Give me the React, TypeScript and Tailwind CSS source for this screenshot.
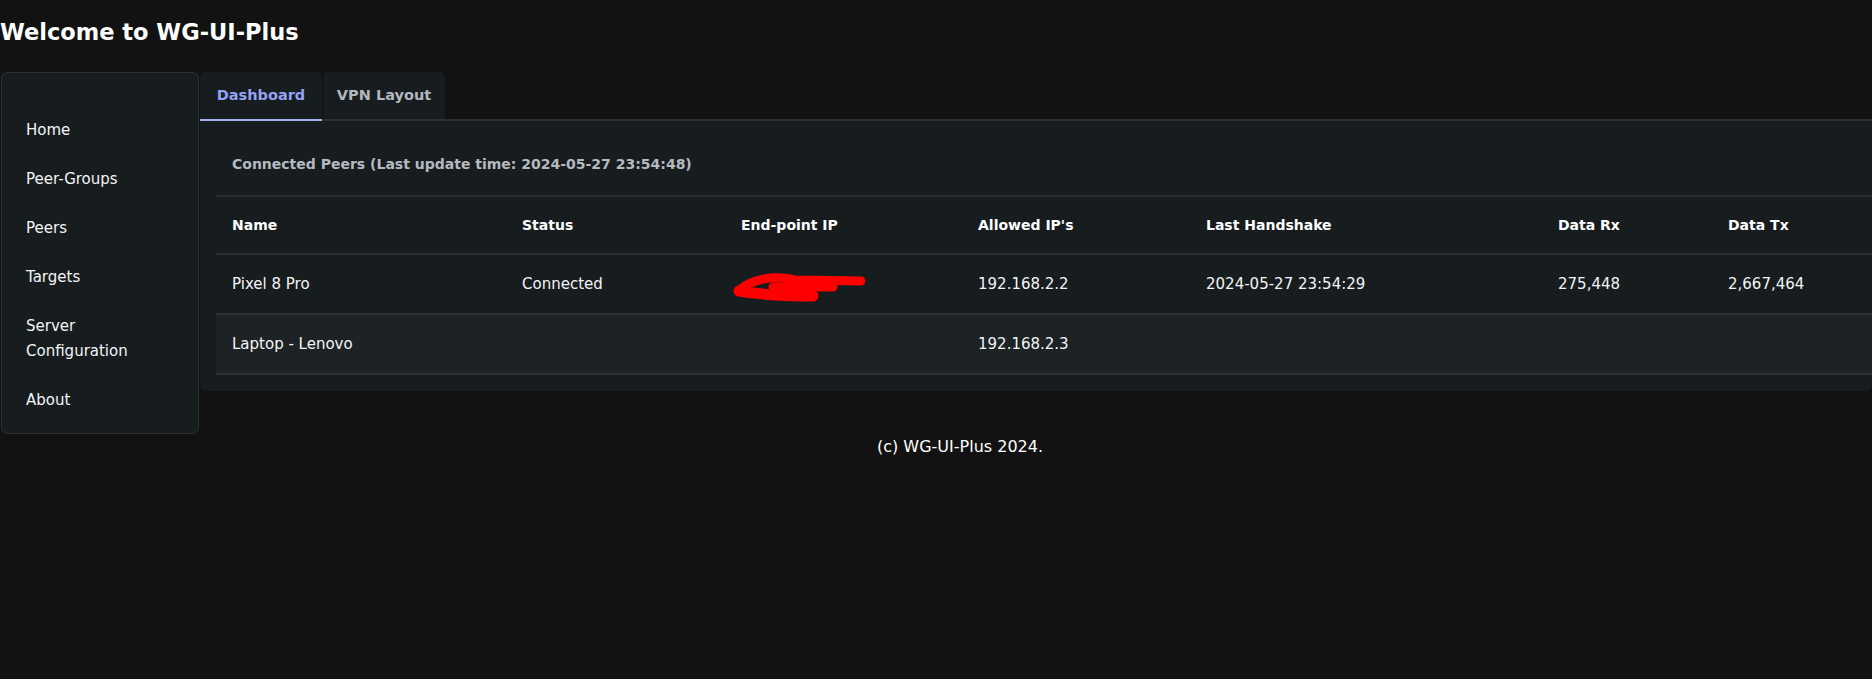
import React from "react"

const navItems = ["Home", "Peer-Groups", "Peers", "Targets", "Server Configuration", "About"]

const columns = ["Name", "Status", "End-point IP", "Allowed IP's", "Last Handshake", "Data Rx", "Data Tx"]

const peers = [
    { name: "Pixel 8 Pro", status: "Connected", endpoint: true, allowed: "192.168.2.2", handshake: "2024-05-27 23:54:29", rx: "275,448", tx: "2,667,464" },
    { name: "Laptop - Lenovo", status: "", endpoint: false, allowed: "192.168.2.3", handshake: "", rx: "", tx: "" }
]

const gridCols = "grid grid-cols-[290px_219px_237px_228px_352px_170px_1fr]"

const Redacted = () => (
    <span className="relative block h-6">
        <svg className="absolute -left-2 -top-[1px]" width="140" height="32" viewBox="0 0 140 32" fill="none">
            <path d="M8 18 C 20 8, 40 4, 62 9 L 128 10" stroke="#ff0000" strokeWidth="9" strokeLinecap="round" strokeLinejoin="round" />
            <path d="M6 20 C 30 24, 60 25, 80 25" stroke="#ff0000" strokeWidth="11" strokeLinecap="round" />
            <path d="M40 16 L 100 16" stroke="#ff0000" strokeWidth="9" strokeLinecap="round" />
        </svg>
    </span>
)

export default function App() {
    return (
        <div className="min-h-screen bg-[#121212] font-['DejaVu_Sans',sans-serif] text-white">
            <h1 className="pt-4 text-[22.5px] font-bold leading-8">Welcome to WG-UI-Plus</h1>

            <div className="mt-6 flex items-start">
                <nav className="ml-[1px] w-[198px] shrink-0 rounded-md border border-[#2a3136] bg-[#171c1f] pb-[8px] pt-[33px]">
                    <ul className="flex flex-col">
                        {navItems.map((item) => (
                            <li key={item} className="px-6 py-3 text-[15px] leading-[25px] text-gray-100">
                                {item === "Server Configuration" ? (
                                    <>
                                        Server
                                        <br />
                                        Configuration
                                    </>
                                ) : (
                                    item
                                )}
                            </li>
                        ))}
                    </ul>
                </nav>

                <main className="ml-[1px] flex min-w-0 flex-1 flex-col">
                    <div className="flex h-[47px] gap-[1px]">
                        <button className="w-[122px] rounded-t-md bg-[#171c1f] text-[14.5px] font-bold text-[#93a2f2]">Dashboard</button>
                        <button className="w-[122px] rounded-t-md bg-[#171c1f] text-[14.5px] font-bold text-[#b2b8be]">VPN Layout</button>
                    </div>
                    <div className="relative rounded-b-md border-t-2 border-[#2a3136] bg-[#171c1f] pb-4 pl-4">
                        <div className="absolute -top-[2px] left-0 h-[2px] w-[122px] bg-[#a3b0ef]" />
                        <h2 className="px-4 pb-[19px] pt-[31px] text-[14px] font-bold leading-6 text-[#b5bac0]">
                            Connected Peers (Last update time: 2024-05-27 23:54:48)
                        </h2>
                        <div className="border-t-2 border-[#2a3136]">
                            <div className={`${gridCols} h-[58px] items-center border-b-2 border-[#2a3136]`}>
                                {columns.map((c) => (
                                    <div key={c} className="px-4 text-[14px] font-bold text-white">
                                        {c}
                                    </div>
                                ))}
                            </div>
                            {peers.map((p, i) => (
                                <div
                                    key={p.name}
                                    className={`${gridCols} h-[60px] items-center border-b-2 border-[#2a3136] text-[15px] text-gray-100 ${i % 2 === 1 ? "bg-[#1d2225]" : ""}`}
                                >
                                    <div className="px-4">{p.name}</div>
                                    <div className="px-4">{p.status}</div>
                                    <div className="px-4">{p.endpoint && <Redacted />}</div>
                                    <div className="px-4">{p.allowed}</div>
                                    <div className="px-4">{p.handshake}</div>
                                    <div className="px-4">{p.rx}</div>
                                    <div className="px-4">{p.tx}</div>
                                </div>
                            ))}
                        </div>
                    </div>
                </main>
            </div>

            <footer className="mt-[1px] pl-12 text-center text-[16px] leading-6 text-white">(c) WG-UI-Plus 2024.</footer>
        </div>
    )
}
